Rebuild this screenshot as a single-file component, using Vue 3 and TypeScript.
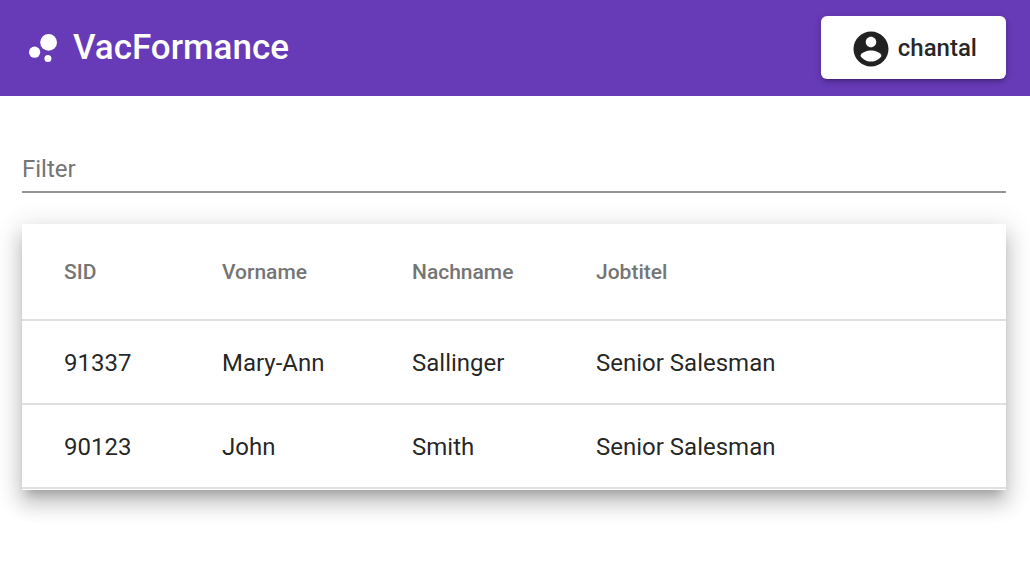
<script setup lang="ts">
import { computed, ref } from 'vue'

interface Employee {
  sid: string
  firstName: string
  lastName: string
  jobTitle: string
}

const employees: Employee[] = [
  { sid: '91337', firstName: 'Mary-Ann', lastName: 'Sallinger', jobTitle: 'Senior Salesman' },
  { sid: '90123', firstName: 'John', lastName: 'Smith', jobTitle: 'Senior Salesman' },
]

const filter = ref('')

const visibleEmployees = computed(() => {
  const term = filter.value.trim().toLowerCase()
  return employees.filter((e) => Object.values(e).join(' ').toLowerCase().includes(term))
})
</script>

<template>
  <div class="page">
    <header class="toolbar">
      <h1 class="brand">
        <svg class="icon" viewBox="0 0 24 24" aria-hidden="true">
          <circle cx="7.2" cy="14.4" r="3.2" />
          <circle cx="14.8" cy="18" r="2" />
          <circle cx="15.2" cy="8.8" r="4.8" />
        </svg>
        <span>VacFormance</span>
      </h1>
      <button class="account" type="button">
        <svg class="icon" viewBox="0 0 24 24" aria-hidden="true">
          <path d="M12 2C6.48 2 2 6.48 2 12s4.48 10 10 10 10-4.48 10-10S17.52 2 12 2zm0 3c1.66 0 3 1.34 3 3s-1.34 3-3 3-3-1.34-3-3 1.34-3 3-3zm0 14.2c-2.5 0-4.71-1.28-6-3.22.03-1.99 4-3.08 6-3.08 1.99 0 5.97 1.09 6 3.08-1.29 1.94-3.5 3.22-6 3.22z" />
        </svg>
        <span>chantal</span>
      </button>
    </header>
    <main class="content">
      <input v-model="filter" class="filter" type="text" placeholder="Filter" aria-label="Filter" />
      <table class="employees">
        <colgroup>
          <col class="col-sid" />
          <col class="col-first" />
          <col class="col-last" />
          <col />
        </colgroup>
        <thead>
          <tr>
            <th scope="col">SID</th>
            <th scope="col">Vorname</th>
            <th scope="col">Nachname</th>
            <th scope="col">Jobtitel</th>
          </tr>
        </thead>
        <tbody>
          <tr v-for="employee in visibleEmployees" :key="employee.sid">
            <td>{{ employee.sid }}</td>
            <td>{{ employee.firstName }}</td>
            <td>{{ employee.lastName }}</td>
            <td>{{ employee.jobTitle }}</td>
          </tr>
        </tbody>
      </table>
    </main>
  </div>
</template>

<style>
body {
  margin: 0;
  background: #fff;
}
</style>

<style scoped>
.page {
  min-height: 100vh;
  font-family: Roboto, 'Liberation Sans', sans-serif;
}

.toolbar {
  display: flex;
  align-items: center;
  justify-content: space-between;
  padding: 16px 24px 17px 22px;
  background: #673ab7;
  color: #fff;
}

.brand {
  display: flex;
  align-items: center;
  gap: 9px;
  margin: 0;
  font-size: 35px;
  font-weight: 500;
  line-height: 42px;
}

.icon {
  width: 42px;
  height: 42px;
  fill: currentColor;
}

.account {
  display: flex;
  align-items: center;
  gap: 6px;
  height: 63px;
  padding: 2px 29px 0;
  border: 0;
  border-radius: 6px;
  background: #fff;
  color: rgba(0, 0, 0, 0.87);
  font-family: inherit;
  font-size: 24px;
  font-weight: 500;
  line-height: 32px;
  box-shadow: 0 5px 2px -4px rgba(0, 0, 0, 0.2), 0 3px 4px rgba(0, 0, 0, 0.14), 0 2px 9px rgba(0, 0, 0, 0.12);
}

.account span {
  padding-bottom: 2px;
}

.content {
  padding: 48px 24px 24px 22px;
}

.filter {
  display: block;
  box-sizing: border-box;
  width: 100%;
  height: 49px;
  margin-bottom: 31px;
  padding: 2px 0 0;
  border: 0;
  border-bottom: 2px solid #949494;
  outline: 0;
  background: transparent;
  color: rgba(0, 0, 0, 0.87);
  font-family: inherit;
  font-size: 24px;
}

.filter::placeholder {
  color: #757575;
  opacity: 1;
}

.employees {
  width: 100%;
  table-layout: fixed;
  border-spacing: 0;
  border-bottom: 1px solid #fff;
  background: #fff;
  box-shadow: 0 9px 9px -5px rgba(0, 0, 0, 0.2), 0 14px 18px 2px rgba(0, 0, 0, 0.14), 0 5px 25px 4px rgba(0, 0, 0, 0.12);
}

.col-sid {
  width: 200px;
}

.col-first {
  width: 190px;
}

.col-last {
  width: 184px;
}

th,
td {
  box-sizing: border-box;
  padding: 0;
  border-bottom: 2px solid #e0e0e0;
  text-align: left;
}

th:first-child,
td:first-child {
  padding-left: 42px;
}

th {
  height: 97px;
  color: #757575;
  font-size: 21px;
  font-weight: 500;
}

td {
  height: 84px;
  padding-top: 2px;
  color: rgba(0, 0, 0, 0.87);
  font-size: 24px;
}
</style>
